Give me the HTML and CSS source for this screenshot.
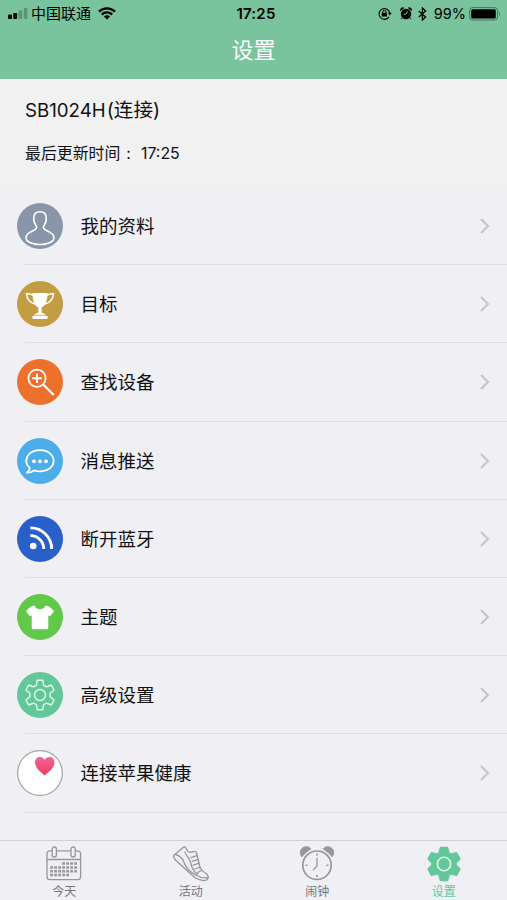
FILE: index.html
```html
<!DOCTYPE html>
<html lang="zh-CN">
<head>
    <meta charset="UTF-8">
    <meta name="viewport" content="width=device-width, initial-scale=1.0">
    <title>设置</title>
    <link rel="stylesheet" href="styles.css">
</head>
<body>
    <header>
        <div class="status">
            <div class="status-left">
                <svg class="signal" width="20" height="12" viewBox="0 0 20 12">
                    <rect x="0" y="6.5" width="4" height="4.5" rx="1"/>
                    <rect x="5.2" y="5" width="4" height="6" rx="1"/>
                    <rect x="10.6" y="2.5" width="3.6" height="8.5" rx="1" opacity=".25"/>
                    <rect x="15.8" y="0" width="3.6" height="11" rx="1" opacity=".25"/>
                </svg>
                <span class="carrier">中国联通</span>
                <svg class="wifi" width="18" height="13" viewBox="0 0 18 13">
                    <path d="M1 4.6A11.5 11.5 0 0 1 17 4.6M3.8 7.6A7.4 7.4 0 0 1 14.2 7.6" fill="none" stroke="#000" stroke-width="2.3"/>
                    <path d="M9 12.6L5.9 9.5A4.4 4.4 0 0 1 12.1 9.5Z"/>
                </svg>
            </div>
            <div class="clock">17:25</div>
            <div class="status-right">
                <svg width="14" height="13" viewBox="0 0 14 13">
                    <path d="M11 9.9A5.4 5.4 0 1 1 11.8 6" fill="none" stroke="#000" stroke-width="1.1"/>
                    <path d="M9.8 5.8H13.8L11.8 8.5Z"/>
                    <rect x="3.8" y="5.8" width="5.2" height="3.8" rx=".5"/>
                    <path d="M4.8 6V4.8A1.6 1.6 0 0 1 8 4.8V6" fill="none" stroke="#000" stroke-width="1"/>
                </svg>
                <svg class="alarm" width="12" height="13" viewBox="0 0 12 13">
                    <circle cx="6" cy="7" r="5.2"/>
                    <path d="M.5 3.6A2.2 2.2 0 0 1 3.7 1ZM11.5 3.6A2.2 2.2 0 0 0 8.3 1ZM2 10.5L1.2 12.3M10 10.5L10.8 12.3" stroke="#000" stroke-width=".8"/>
                    <path d="M7.6 4.3L6 7.2H3.6" fill="none" stroke="#79c49c" stroke-width="1"/>
                </svg>
                <svg class="bluetooth" width="9" height="14" viewBox="0 0 9 14">
                    <path d="M.8 4L7.6 10L4.4 13V1L7.6 4L.8 10" fill="none" stroke="#000" stroke-width="1.3"/>
                </svg>
                <span class="percent">99%</span>
                <svg class="battery" width="32" height="14" viewBox="0 0 32 14">
                    <rect x=".6" y=".6" width="28" height="12.4" rx="3" fill="none" stroke="#000" stroke-opacity=".4" stroke-width="1"/>
                    <rect x="2.2" y="2.2" width="24.6" height="9.2" rx="1.5"/>
                    <path d="M30 4.7Q31.6 6.8 30 8.9Z" opacity=".5"/>
                </svg>
            </div>
        </div>
        <h1>设置</h1>
    </header>

    <section class="device">
        <div class="device-name">SB1024H<span class="state">(连接)</span></div>
        <div class="device-time">最后更新时间<span class="colon">:</span>17:25</div>
    </section>

    <ul class="menu">
        <li>
            <svg class="icon" viewBox="0 0 46 46">
                <circle cx="23" cy="23" r="23" fill="#8995a8"/>
                <path d="M19.6 24.6C19.8 22.3 16.6 20.8 16.7 15.8C16.5 10.8 19 8.8 23 8.8S29.5 10.8 29.3 15.8C29.4 20.8 26.2 22.3 26.4 24.6C26.8 28.3 37 28.2 37 34.8C37 38.9 30 41.5 23 41.5S9 38.9 9 34.8C9 28.2 19.2 28.3 19.6 24.6Z" fill="none" stroke="#fff" stroke-width="1.6"/>
            </svg>
            <span>我的资料</span>
            <svg class="arrow" viewBox="0 0 10 16"><path d="M1 1L8 8L1 15"/></svg>
        </li>
        <li>
            <svg class="icon" viewBox="0 0 46 46">
                <circle cx="23" cy="23" r="23" fill="#c29d42"/>
                <path d="M15.4 12H30.6C30.5 20 28 25.2 24.7 26.5V31.5L28.5 33.5V35H30.5V38H15.5V35H17.5V33.5L21.3 31.5V26.5C18 25.2 15.5 20 15.4 12Z" fill="#fff"/>
                <path d="M15.8 14.5Q14 12.3 9.5 12.7Q10 20.8 18.6 23.3M30.2 14.5Q32 12.3 36.5 12.7Q36 20.8 27.4 23.3" fill="none" stroke="#fff" stroke-width="1.5"/>
                <path d="M18 34.3H28" stroke="#c29d42" stroke-width=".8"/>
            </svg>
            <span>目标</span>
            <svg class="arrow" viewBox="0 0 10 16"><path d="M1 1L8 8L1 15"/></svg>
        </li>
        <li>
            <svg class="icon" viewBox="0 0 46 46">
                <circle cx="23" cy="23" r="23" fill="#ee702d"/>
                <g fill="none" stroke="#fff">
                    <circle cx="20" cy="19.2" r="8.6" stroke-width="1.7"/>
                    <path d="M26.2 25.5L36.8 36" stroke-width="2.2"/>
                    <path d="M20 14.5V24M15.2 19.2H24.8" stroke-width="1.9"/>
                </g>
            </svg>
            <span>查找设备</span>
            <svg class="arrow" viewBox="0 0 10 16"><path d="M1 1L8 8L1 15"/></svg>
        </li>
        <li>
            <svg class="icon" viewBox="0 0 46 46">
                <circle cx="23" cy="23" r="23" fill="#4caee8"/>
                <path d="M12.8 29.8C7.5 25.5 8.8 19.5 12.2 16C17.5 11 28.5 10.8 33.6 16C38 20.3 37.5 26.3 33.2 30C29 33.5 22 34 17 32.4Q13.5 35.4 9.8 34.6Q12.8 32.6 12.8 29.8Z" fill="none" stroke="#fff" stroke-width="1.7" stroke-linejoin="round"/>
                <g fill="#fff">
                    <circle cx="17" cy="23.3" r="1.9"/>
                    <circle cx="23" cy="23.3" r="1.9"/>
                    <circle cx="29" cy="23.3" r="1.9"/>
                </g>
            </svg>
            <span>消息推送</span>
            <svg class="arrow" viewBox="0 0 10 16"><path d="M1 1L8 8L1 15"/></svg>
        </li>
        <li>
            <svg class="icon" viewBox="0 0 46 46">
                <circle cx="23" cy="23" r="23" fill="#285fc8"/>
                <circle cx="16.2" cy="30" r="3.3" fill="#fff"/>
                <path d="M13.3 19.6A13 13 0 0 1 26.7 33M13.3 11.9A21 21 0 0 1 34.7 33" fill="none" stroke="#fff" stroke-width="2.9"/>
            </svg>
            <span>断开蓝牙</span>
            <svg class="arrow" viewBox="0 0 10 16"><path d="M1 1L8 8L1 15"/></svg>
        </li>
        <li>
            <svg class="icon" viewBox="0 0 46 46">
                <circle cx="23" cy="23" r="23" fill="#62c849"/>
                <path d="M17.3 11.6Q19 15.2 23 15.2T28.7 11.6Q33 12.2 37 17.3L33 22.5L31.3 21.3V34Q31.3 35.2 30 35.2H16Q14.7 35.2 14.7 34V21.3L13 22.5L9 17.3Q13 12.2 17.3 11.6Z" fill="#fff"/>
            </svg>
            <span>主题</span>
            <svg class="arrow" viewBox="0 0 10 16"><path d="M1 1L8 8L1 15"/></svg>
        </li>
        <li>
            <svg class="icon" viewBox="-23 -23 46 46">
                <circle r="23" fill="#62c799"/>
                <g fill="none" stroke="#e4fff2" stroke-width="1.4" stroke-linejoin="round">
                    <path d="M-3.6-9.6L-2.8-14.7H2.8L3.6-9.6Q5-9 6.4-8.2L11.3-10L14.1-5L10.1-1.7V1.7L14.1 5L11.3 10L6.4 8.2Q5 9 3.6 9.6L2.8 14.7H-2.8L-3.6 9.6Q-5 9-6.4 8.2L-11.3 10L-14.1 5L-10.1 1.7V-1.7L-14.1-5L-11.3-10L-6.4-8.2Q-5-9-3.6-9.6Z"/>
                    <circle r="5.5"/>
                </g>
            </svg>
            <span>高级设置</span>
            <svg class="arrow" viewBox="0 0 10 16"><path d="M1 1L8 8L1 15"/></svg>
        </li>
        <li>
            <svg class="icon" viewBox="0 0 46 46">
                <defs>
                    <linearGradient id="heart" x1="0" y1="0" x2="0" y2="1">
                        <stop offset="0" stop-color="#f2649f"/>
                        <stop offset="1" stop-color="#ee3f55"/>
                    </linearGradient>
                </defs>
                <circle cx="23" cy="23" r="22.4" fill="#fff" stroke="#aaaaac" stroke-width="1.3"/>
                <path d="M27.7 25.4C22.5 21.4 18 17.2 18 12.3C18 8.8 20.3 6.9 22.8 6.9C25.2 6.9 26.8 8 27.7 9.8C28.6 8 30.2 6.9 32.6 6.9C35.2 6.9 37.5 8.8 37.5 12.3C37.5 17.2 33 21.4 27.7 25.4Z" fill="url(#heart)"/>
            </svg>
            <span>连接苹果健康</span>
            <svg class="arrow" viewBox="0 0 10 16"><path d="M1 1L8 8L1 15"/></svg>
        </li>
    </ul>

    <nav>
        <a>
            <svg viewBox="0 0 36 36">
                <g fill="none" stroke="#97979a" stroke-width="1.3">
                    <path d="M6 4.8H4Q1 4.8 1 8V30.5Q1 33.7 4 33.7H31.5Q34.6 33.7 34.6 30.5V8Q34.6 4.8 31.5 4.8H29.5M10.7 4.8H24.5M1 13.5H34.6"/>
                    <rect x="6.2" y="1" width="4.2" height="10" rx="2.1"/>
                    <rect x="25" y="1" width="4.2" height="10" rx="2.1"/>
                    <path d="M16.2 17.6H32M4.2 21.4H32M4.2 25.2H32M4.2 29H24" stroke-width="2.5" stroke-dasharray="2.8 1.2"/>
                </g>
            </svg>
            <span>今天</span>
        </a>
        <a>
            <svg viewBox="0 0 36 36">
                <g fill="none" stroke="#97979a" stroke-width="1.3" stroke-linejoin="round" stroke-linecap="round">
                    <path d="M1.2 9L10.5 1.2Q12 .2 12.8 2C14.2 5.6 16.5 7 19.5 5.8Q22.5 4.6 23.6 7L26 17.5C26.8 22.5 29 25 32 26.8C35.5 28.8 36.2 31.8 34 33.8C31.5 35.3 26.5 34.4 22 31.8L3 14.5Q-.5 11 1.2 9Z"/>
                    <path d="M2.6 8.5C6.5 9.6 9.5 12.4 10.8 16C13 22.6 17.2 26 22.8 29C27 31.4 31 32.6 34.8 31.6"/>
                    <path d="M12 6C12.6 9.4 15.8 11.4 17 15L19.4 22Q20.8 25.6 24.2 28.2Q25 25 29 24.6"/>
                    <path d="M18 11.6L23.8 9.6M19.2 15.4L24.9 13.4M20.4 19.2L25.9 17.2M21.8 23L27 21.4"/>
                </g>
            </svg>
            <span>活动</span>
        </a>
        <a>
            <svg viewBox="0 0 36 36">
                <g fill="none" stroke="#97979a">
                    <circle cx="18" cy="19.2" r="14.2" stroke-width="1.7"/>
                    <path d="M18 12V20L14.2 24" stroke-width="1.3"/>
                    <path d="M18 7.5V9.5M18 29V31M6.5 19.2H8.5M27.5 19.2H29.5" stroke-width="1.6"/>
                </g>
                <path d="M2.9 10.8A5.6 5.6 0 0 1 11.6 2.6Q11.4 3.8 8.5 5.2Q5.6 7.2 2.9 10.8ZM33.1 10.8A5.6 5.6 0 0 0 24.4 2.6Q24.6 3.8 27.5 5.2Q30.4 7.2 33.1 10.8Z" fill="#97979a" stroke="#97979a" stroke-linejoin="round"/>
            </svg>
            <span>闹钟</span>
        </a>
        <a class="active">
            <svg viewBox="-18 -18 36 36">
                <path d="M-4.6-10.8L-3.2-16H3.2L4.6-10.8L7-9.4L12.2-10.8L15.4-5.2L11.6-1.4V1.4L15.4 5.2L12.2 10.8L7 9.4L4.6 10.8L3.2 16H-3.2L-4.6 10.8L-7 9.4L-12.2 10.8L-15.4 5.2L-11.6 1.4V-1.4L-15.4-5.2L-12.2-10.8L-7-9.4Z" fill="#62c799" stroke="#62c799" stroke-width="2.4" stroke-linejoin="round"/>
                <circle r="6.7" fill="none" stroke="#ddf5e8" stroke-width="1.6"/>
            </svg>
            <span>设置</span>
        </a>
    </nav>
</body>
</html>
```

FILE: styles.css
```css
* {
    box-sizing: border-box;
}
body {
    margin: 0;
    height: 900px;
    display: flex;
    flex-direction: column;
    overflow: hidden;
    background: #efeff4;
    color: #111;
    font-family: Inter, "Noto Sans CJK SC", sans-serif;
}
svg {
    display: block;
    flex: none;
}
header {
    height: 79px;
    background: #79c49c;
}
.status {
    display: grid;
    grid-template-columns: 1fr auto 1fr;
    align-items: center;
    height: 27px;
    padding: 0 6px 0 8px;
    color: #000;
    font-size: 15px;
    line-height: 27px;
}
.status-left, .status-right {
    display: flex;
    align-items: center;
}
.status-right {
    justify-content: flex-end;
}
.carrier {
    margin: 0 7px 0 3px;
}
.clock {
    padding-left: 3px;
    font-weight: 600;
    letter-spacing: 0.2px;
}
.alarm {
    margin-left: 8px;
}
.bluetooth {
    margin: 0 7px 0 6px;
}
.percent {
    margin-right: 3px;
    font-size: 14.5px;
}
h1 {
    margin: 0;
    padding-top: 1px;
    color: #fff;
    font-size: 22px;
    font-weight: 400;
    line-height: 44px;
    text-align: center;
}
.device {
    height: 108px;
    padding: 16px 25px 0;
    background: #f1f1f1;
}
.device-name {
    font-size: 18.7px;
    line-height: 30px;
}
.state {
    margin-left: 1px;
    font-size: 19.6px;
}
.device-time {
    margin-top: 15px;
    font-size: 15.9px;
    line-height: 26px;
}
.colon {
    margin: 0 10px 0 6px;
}
.menu {
    margin: 0;
    padding: 0;
    list-style: none;
    flex: 1;
}
.menu li {
    position: relative;
    display: flex;
    align-items: center;
    height: 78.2px;
    padding: 0 17px;
    font-size: 18.5px;
}
.menu li span {
    padding-bottom: 2px;
}
.menu li::after {
    content: "";
    position: absolute;
    left: 25px;
    right: 0;
    bottom: 0;
    height: 1px;
    background: #dedee2;
}
.icon {
    width: 46px;
    height: 46px;
    margin-right: 17.5px;
}
.arrow {
    width: 10px;
    height: 16px;
    margin-left: auto;
    fill: none;
    stroke: #c3c3c8;
    stroke-width: 2;
}
nav {
    display: flex;
    height: 60px;
    padding-left: 1px;
    border-top: 1px solid #d0d0d4;
}
nav a {
    flex: 1;
    display: flex;
    flex-direction: column;
    align-items: center;
    padding-top: 5px;
    color: #77777a;
    font-size: 12px;
    line-height: 18px;
}
nav svg {
    width: 36px;
    height: 36px;
    margin-bottom: 1px;
}
nav .active {
    color: #62c799;
}
```
